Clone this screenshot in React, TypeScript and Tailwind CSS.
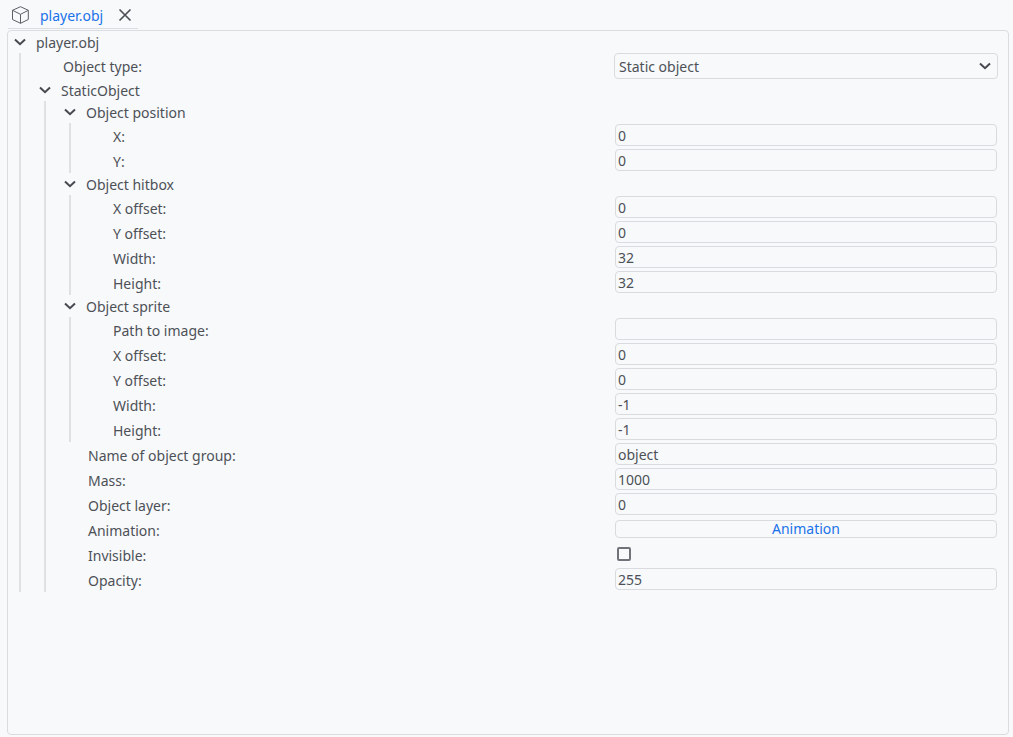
import { useId, useState, type ReactNode } from "react";

function Chevron({ open = true }: { open?: boolean }) {
  return (
    <svg
      viewBox="0 0 12 8"
      className={open ? "h-2 w-3 shrink-0" : "h-2 w-3 shrink-0 -rotate-90"}
      fill="none"
      stroke="#45484f"
      strokeWidth="2"
      aria-hidden="true"
    >
      <path d="M1 1.5 6 6.2 11 1.5" />
    </svg>
  );
}

function Group({ title, children }: { title: string; children: ReactNode }) {
  const [open, setOpen] = useState(true);
  return (
    <section>
      <button
        type="button"
        aria-expanded={open}
        onClick={() => setOpen(!open)}
        className="flex h-[22px] w-full items-center gap-2.5 pl-1.5 text-left"
      >
        <Chevron open={open} />
        <span className="pt-0.5">{title}</span>
      </button>
      {open && <div className="ml-[11px] border-l-2 border-[#e0e1e3] pl-3">{children}</div>}
    </section>
  );
}

type RowProps = { label: string; children: (id: string) => ReactNode };

function Row({ label, children }: RowProps) {
  const id = useId();
  return (
    <div className="flex h-[25px] items-center justify-between pl-[30px]">
      <label htmlFor={id} className="pt-0.5">
        {label}
      </label>
      <div className="flex h-full w-[38.4cqw] shrink-0 items-center px-px pb-px">{children(id)}</div>
    </div>
  );
}

function TextRow({ label, value }: { label: string; value: string }) {
  return (
    <Row label={label}>
      {(id) => (
        <input
          id={id}
          type="text"
          defaultValue={value}
          className="h-[22px] w-full rounded border border-[#d9dbde] bg-transparent px-0.5 outline-none focus:border-[#1a73e8]"
        />
      )}
    </Row>
  );
}

function Tab() {
  return (
    <div className="flex h-[29px] w-[130px] items-center border-b border-[#dadce0] pl-[3px]">
      <svg
        viewBox="0 0 18 18"
        className="mt-px h-[18px] w-[18px]"
        fill="none"
        stroke="#5c6066"
        strokeWidth="1"
        strokeLinejoin="round"
        aria-hidden="true"
      >
        <path d="M9.5 .7 17.3 4.3V13.5L9.5 17.3 1.5 13.5V4.3Z" />
        <path d="M1.5 4.3 9.5 8.3 17.3 4.3M9.5 8.3V17.3" />
      </svg>
      <span className="ml-[11px] pt-1 text-[#1a73e8]">player.obj</span>
      <button type="button" aria-label="Close player.obj" className="ml-[15px] pt-0.5">
        <svg viewBox="0 0 14 14" className="h-3.5 w-3.5" stroke="#4d5157" strokeWidth="1.7" aria-hidden="true">
          <path d="M1.5 1.5 12.5 12.5M12.5 1.5 1.5 12.5" />
        </svg>
      </button>
    </div>
  );
}

function ObjectTypeRow() {
  return (
    <div className="flex h-[26px] items-center justify-between pl-[30px]">
      <label htmlFor="object-type" className="pt-0.5">
        Object type:
      </label>
      <div className="grid w-[38.4cqw] shrink-0 items-center">
        <select
          id="object-type"
          className="col-start-1 row-start-1 h-[26px] w-full appearance-none rounded border border-[#d9dbde] bg-transparent px-1 pt-0.5 outline-none"
        >
          <option>Static object</option>
        </select>
        <span className="pointer-events-none col-start-1 row-start-1 mr-[7px] justify-self-end">
          <Chevron />
        </span>
      </div>
    </div>
  );
}

export default function App() {
  return (
    <main className="flex min-h-screen flex-col bg-[#f8f9fb] pr-1 pb-0.5 pl-[7px] font-['Noto_Sans','Open_Sans',sans-serif] text-sm leading-5 text-[#4d5157]">
      <div className="mb-px flex pl-px">
        <Tab />
      </div>
      <div className="@container flex-1 rounded border border-[#dadce0]">
        <div className="pr-2.5">
          <Group title="player.obj">
            <ObjectTypeRow />
            <Group title="StaticObject">
              <Group title="Object position">
                <TextRow label="X:" value="0" />
                <TextRow label="Y:" value="0" />
              </Group>
              <Group title="Object hitbox">
                <TextRow label="X offset:" value="0" />
                <TextRow label="Y offset:" value="0" />
                <TextRow label="Width:" value="32" />
                <TextRow label="Height:" value="32" />
              </Group>
              <Group title="Object sprite">
                <TextRow label="Path to image:" value="" />
                <TextRow label="X offset:" value="0" />
                <TextRow label="Y offset:" value="0" />
                <TextRow label="Width:" value="-1" />
                <TextRow label="Height:" value="-1" />
              </Group>
              <TextRow label="Name of object group:" value="object" />
              <TextRow label="Mass:" value="1000" />
              <TextRow label="Object layer:" value="0" />
              <Row label="Animation:">
                {(id) => (
                  <button
                    id={id}
                    type="button"
                    className="flex h-[18px] w-full items-center justify-center rounded border border-[#d9dbde] text-[#1a73e8]"
                  >
                    Animation
                  </button>
                )}
              </Row>
              <Row label="Invisible:">
                {(id) => (
                  <input
                    id={id}
                    type="checkbox"
                    className="ml-0.5 h-3.5 w-3.5 appearance-none rounded-xs border-2 border-[#70747a] checked:bg-[#1a73e8]"
                  />
                )}
              </Row>
              <TextRow label="Opacity:" value="255" />
            </Group>
          </Group>
        </div>
      </div>
    </main>
  );
}
